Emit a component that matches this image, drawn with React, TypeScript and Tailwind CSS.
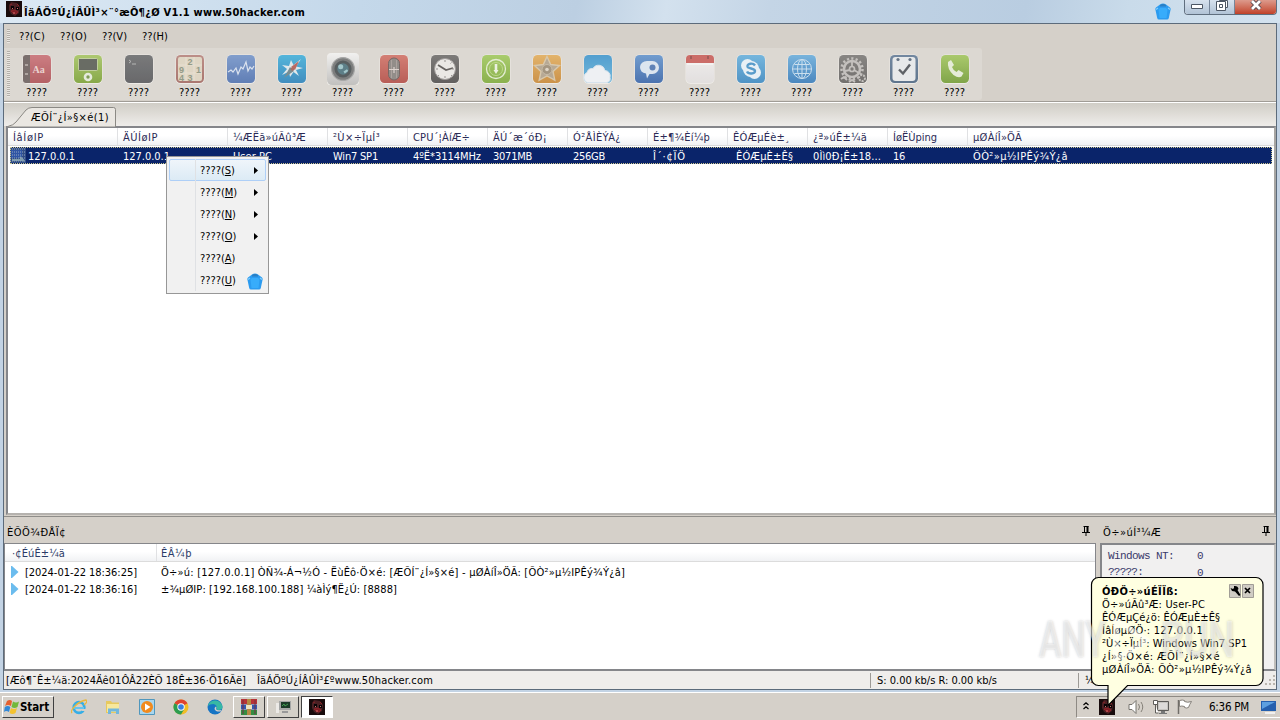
import { useLayoutEffect, useRef } from 'react'
import type { ReactNode } from 'react'
import clsx from 'clsx'

type TextProps = {
  children: string
  w: number
  className?: string
}

// Single line of UI text, tracked so that it takes exactly `w` pixels
function T({ children, w, className }: TextProps) {
  const ref = useRef<HTMLSpanElement>(null)

  useLayoutEffect(() => {
    const el = ref.current
    if (!el) return
    el.style.letterSpacing = '0px'
    const natural = el.getBoundingClientRect().width
    el.style.letterSpacing = `${(w - natural) / children.length}px`
  }, [children, w])

  return (
    <span ref={ref} className={clsx('inline-block shrink-0 whitespace-pre', className)}>
      {children}
    </span>
  )
}

const COLUMNS = [
  { head: 'ÍâÍøIP', hw: 31, cell: '127.0.0.1', cw: 47, width: 'w-[110px]' },
  { head: 'ÄÚÍøIP', hw: 35, cell: '127.0.0.1', cw: 47, width: 'w-[110px]' },
  { head: '¼ÆËã»úÃû³Æ', hw: 73, cell: 'User-PC', cw: 39, width: 'w-[100px]' },
  { head: '²Ù×÷ÏµÍ³', hw: 47, cell: 'Win7 SP1', cw: 45, width: 'w-[80px]' },
  { head: 'CPU´¦ÀíÆ÷', hw: 57, cell: '4ºË*3114MHz', cw: 68, width: 'w-[80px]' },
  { head: 'ÄÚ´æ´óÐ¡', hw: 54, cell: '3071MB', cw: 39, width: 'w-[80px]' },
  { head: 'Ó²ÅÌÈÝÁ¿', hw: 48, cell: '256GB', cw: 32, width: 'w-[80px]' },
  { head: 'É±¶¾Èí¼þ', hw: 57, cell: 'Î´·¢ÏÖ', cw: 33, width: 'w-[80px]' },
  { head: 'ÊÓÆµÉè±¸', hw: 57, cell: 'ÊÓÆµÈ±Ê§', cw: 57, width: 'w-[80px]' },
  { head: '¿ª»úÊ±¼ä', hw: 54, cell: '0Ìì0Ð¡Ê±18...', cw: 68, width: 'w-[80px]' },
  { head: 'ÍøËÙping', hw: 44, cell: '16', cw: 12, width: 'w-[80px]' },
  { head: 'µØÀíÎ»ÖÃ', hw: 49, cell: 'ÕÒ²»µ½IPÊý¾Ý¿â', cw: 95, width: 'w-[240px]' },
]

const MENU = [
  { label: '??(C)', w: 26, gap: 'ml-[9px]' },
  { label: '??(O)', w: 27, gap: 'ml-[15px]' },
  { label: '??(V)', w: 25, gap: 'ml-[15px]' },
  { label: '??(H)', w: 26, gap: 'ml-[15px]' },
]

const CONTEXT = [
  { key: 'S', sub: true },
  { key: 'M', sub: true },
  { key: 'N', sub: true },
  { key: 'O', sub: true },
  { key: 'A', sub: false },
  { key: 'U', sub: false },
]

const BALLOON = [
  { text: 'Ö÷»úÃû³Æ: User-PC', w: 103 },
  { text: 'ÊÓÆµÇé¿ö: ÊÓÆµÈ±Ê§', w: 118 },
  { text: 'ÍâÍøµØÖ·: 127.0.0.1', w: 101 },
  { text: '²Ù×÷ÏµÍ³: Windows Win7 SP1', w: 145 },
  { text: '¿Í»§·Ö×é: ÆÕÍ¨¿Í»§×é', w: 118 },
  { text: 'µØÀíÎ»ÖÃ: ÕÒ²»µ½IPÊý¾Ý¿â', w: 150 },
]

type Tool = { from: string; to: string; art: ReactNode }

const TOOLS: Tool[] = [
  {
    from: '#cb747a',
    to: '#b0555a',
    art: (
      <>
        <path d="M2 5q0-3 3-3h4v28H5q-3 0-3-3z" fill="#706463" />
        <path d="M4 12h3M4 21h3" stroke="#aaa09c" strokeWidth="2" />
        <text x="11.500" y="20" fontSize="10" fontWeight="bold" fill="#ecd3cf" fontFamily="Liberation Serif">Aa</text>
      </>
    ),
  },
  {
    from: '#a9c767',
    to: '#7fa43b',
    art: (
      <>
        <rect x="6.500" y="5.500" width="19" height="12" rx="1" fill="#5d6159" stroke="#d0dfaa" strokeWidth=".8" />
        <circle cx="16" cy="24" r="4.300" fill="#e6eddc" />
        <circle cx="16" cy="24" r="1.700" fill="#76954a" />
      </>
    ),
  },
  {
    from: '#6f7072',
    to: '#5c5d60',
    art: <path d="M6 7l2 1.500-2 1.500M9 11h4" stroke="#b3b3b3" fill="none" />,
  },
  {
    from: '#b98780',
    to: '#a56d66',
    art: (
      <>
        <rect x="4" y="4" width="24" height="24" rx="2" fill="#e0d6c3" />
        <path d="M12 4v24M20 4v24M4 12h24M4 20h24" stroke="#e9e1d2" />
        <g fontSize="9" fill="#8c9580" fontFamily="Liberation Sans" fontWeight="bold">
          <text x="13.500" y="11.500">2</text>
          <text x="5" y="19.500">9</text>
          <text x="22" y="19.500">1</text>
          <text x="5" y="27.500">4</text>
          <text x="13.500" y="27.500">3</text>
        </g>
      </>
    ),
  },
  {
    from: '#7898cc',
    to: '#5375b3',
    art: (
      <path
        d="M3 19l3-2 2 2 3-4 2 6 3-7 2 2 3-7 2 9 2-4 2 2 2-3"
        stroke="#dbe4f2"
        strokeWidth="1.200"
        fill="none"
      />
    ),
  },
  {
    from: '#46b2dc',
    to: '#3186bd',
    art: (
      <>
        <path d="M25 6l-5 7.500 7 1.500-7 2 3 6-5.500-4-3.500 5-1-5.500-7 3.500 5-6-5-4 7 1 2-6 2.500 5z" fill="#e0eaee" />
        <path d="M23 8l-4 9-4-3z" fill="#b95f58" />
        <path d="M8 25l6-11 4 4z" fill="#6f868c" />
        <circle cx="16.500" cy="16" r="1.800" fill="#a7625a" />
      </>
    ),
  },
  {
    from: '#f4f4f3',
    to: '#bfbebd',
    art: (
      <>
        <circle cx="16" cy="16" r="10" fill="#737576" stroke="#a2a3a3" />
        <circle cx="16" cy="16" r="7.500" fill="#4a5154" />
        <circle cx="16" cy="16" r="5" fill="#507681" />
        <circle cx="14" cy="14" r="2.200" fill="#9ec6cb" />
        <path d="M17 19l3-2" stroke="#9ec6cb" strokeWidth="2" />
      </>
    ),
  },
  {
    from: '#d3766b',
    to: '#b5514a',
    art: (
      <>
        <rect x="10.500" y="5" width="11" height="22" rx="5.500" fill="#8b8582" stroke="#705a57" />
        <path d="M13.500 7v18M18.500 7v18" stroke="#a79d99" />
        <path d="M11 16.500h10M16 14v6" stroke="#ddd2cd" strokeWidth="1.200" />
      </>
    ),
  },
  {
    from: '#737170',
    to: '#555352',
    art: (
      <>
        <circle cx="16" cy="16" r="10.500" fill="#eceae8" stroke="#989493" />
        <path d="M9 12l8 5 7-2" stroke="#5b5856" strokeWidth="1.800" fill="none" />
        <path d="M16 7v2M16 23v2M7 16h2M23 16h2M22.500 9.500l-1 1M10 22l-1 1M22 22l1 1" stroke="#918d8b" />
      </>
    ),
  },
  {
    from: '#a4cb62',
    to: '#82ad40',
    art: (
      <>
        <circle cx="16" cy="16" r="9.500" fill="none" stroke="#e5efd4" strokeWidth="1.300" />
        <circle cx="16" cy="16" r="6.500" fill="none" stroke="#bad884" />
        <path d="M16 11v7" stroke="#eef4e3" strokeWidth="2.600" />
        <path d="M13.500 17h5L16 21z" fill="#eef4e3" />
      </>
    ),
  },
  {
    from: '#e4b061',
    to: '#ca8b3b',
    art: (
      <>
        <path
          d="M16 3.500l3.700 8 8.800 1-6.500 6 1.800 8.700L16 23l-7.800 4.200L10 18.500l-6.500-6 8.800-1z"
          fill="#b3a58f"
          stroke="#d9c7a8"
          strokeWidth="1.400"
        />
        <circle cx="16" cy="16.500" r="5" fill="#9f8f79" stroke="#c5b8a3" />
        <circle cx="16" cy="16.500" r="1.800" fill="#dfd5c5" />
      </>
    ),
  },
  {
    from: '#4499cf',
    to: '#69b5dd',
    art: (
      <path
        d="M5 29.500a5.500 5.500 0 0 1 0-10 5.500 5.500 0 0 1 6-4 6.500 6.500 0 0 1 12 2 5.500 5.500 0 0 1 5 7q1 4-3 5z"
        fill="#f0f3f7"
        stroke="#d6e4ef"
      />
    ),
  },
  {
    from: '#6797cf',
    to: '#3c68ac',
    art: (
      <>
        <path d="M7 14a7 6 0 0 1 7-6h5.500a6.500 6.500 0 0 1 0 13h-3L14 25.500l-1-5q-6-1-6-6.500z" fill="#dce7f3" />
        <circle cx="19.500" cy="14.500" r="3" fill="#5279b4" />
      </>
    ),
  },
  {
    from: '#f2f0ef',
    to: '#e3e0e0',
    art: (
      <>
        <path d="M2 10V6q0-4 4-4h20q4 0 4 4v4z" fill="#ca625d" />
        <path d="M7 3v3M24 3v3" stroke="#8c4b48" strokeWidth="1.500" />
        <path d="M3 11h26" stroke="#fff" />
      </>
    ),
  },
  {
    from: '#6bb3df',
    to: '#418cc4',
    art: (
      <>
        <circle cx="12.500" cy="12.500" r="6.500" fill="#eaf3f9" />
        <circle cx="19.500" cy="19.500" r="6.500" fill="#eaf3f9" />
        <circle cx="16" cy="16" r="8" fill="#eaf3f9" />
        <path d="M20 12.500c-2-3-8-2-7.500 1 .5 2.500 7.500 1.500 7.500 4.500 0 3-6.500 3.500-8 .5" stroke="#4b96ca" strokeWidth="2.400" fill="none" />
      </>
    ),
  },
  {
    from: '#6eb0de',
    to: '#3c7fbd',
    art: (
      <g fill="none" stroke="#c9e0f2">
        <circle cx="16" cy="16" r="9.500" />
        <ellipse cx="16" cy="16" rx="4.500" ry="9.500" />
        <path d="M16 6.500v19M6.500 16h19M8.500 11.500h15M8.500 20.500h15" />
      </g>
    ),
  },
  {
    from: '#7f7d7b',
    to: '#676563',
    art: (
      <g fill="none" stroke="#c2bfbc">
        <circle cx="15" cy="16" r="10.500" strokeWidth="2.500" strokeDasharray="2.200 2.200" />
        <circle cx="15" cy="16" r="8" strokeWidth="2.600" />
        <circle cx="15" cy="16" r="2.500" strokeWidth="1.700" />
        <path d="M15 9v4M8 18l5-1M17 17l5 3" strokeWidth="1.800" />
        <circle cx="25" cy="25" r="3" strokeWidth="2" strokeDasharray="2 1" />
        <path d="M4 26l3-2 3 3M12 29l3-2 3 2" strokeWidth="2" />
      </g>
    ),
  },
  {
    from: '#68809b',
    to: '#526b86',
    art: (
      <>
        <rect x="4.500" y="4" width="23" height="24" rx="3" fill="#e9ebed" />
        <circle cx="10" cy="6.500" r="1.600" fill="#5b6b7d" />
        <circle cx="22" cy="6.500" r="1.600" fill="#5b6b7d" />
        <path d="M11 16.500l4 4 7-9" stroke="#51565c" strokeWidth="2.400" fill="none" />
      </>
    ),
  },
  {
    from: '#a5c862',
    to: '#77a03b',
    art: (
      <path
        d="M9 9l3-2 3 5-2 2q1 3 4.500 5l2-2 5 3-2 3.500q-3 2-8-1.500Q8 16 9 9z"
        fill="#e6eed9"
      />
    ),
  },
]

function ToolButton({ tool, index }: { tool: Tool; index: number }) {
  const id = `tool-${index}`
  const big = index === 6
  return (
    <div className="flex w-[51px] shrink-0 flex-col items-center">
      <svg viewBox={big ? '2 2 28 28' : '0 0 32 32'} className="h-[32px] w-[32px] opacity-90">
        <defs>
          <linearGradient id={id} x1="0" y1="0" x2="0" y2="1">
            <stop offset="0" stopColor={tool.from} />
            <stop offset="1" stopColor={tool.to} />
          </linearGradient>
        </defs>
        <rect x="1.500" y="1.500" width="29" height="29.500" rx="5" fill="#efede9" />
        <rect x="2" y="2" width="28" height="28" rx="4.500" fill={`url(#${id})`} />
        {tool.art}
      </svg>
      <T w={21} className="mt-px leading-[14px]">????</T>
    </div>
  )
}

// Blue pentagonal badge, used in the title bar and over the context menu
function BlueBadge({ className }: { className?: string }) {
  return (
    <svg viewBox="0 0 16 17" className={clsx('h-[17px] w-[16px]', className)}>
      <path d="M5 1.500Q8-.5 11 1.500l4 3q1 1 .5 2.500L13.800 15q-.3 1.500-1.800 1.500H4Q2.500 16.500 2.200 15L.5 7Q0 5.500 1 4.500z" fill="#2b9bf0" />
      <path d="M5 2q3-2 6 0v1.500H5z" fill="#2a7fc4" />
      <path d="M3.500 6.500L5 5h6l1.500 1.500-1 8.500h-7z" fill="#37acfb" />
      <path d="M1 6.500l2-1.500M15 6.500L13 5" stroke="#83cdfb" strokeWidth="1.300" />
    </svg>
  )
}

function AppIcon() {
  return (
    <svg viewBox="0 0 16 16" className="h-4 w-4 shrink-0">
      <path d="M0 0h16v16H0z" fill="#180b0c" />
      <path d="M3 4l2-3 6 1 3 4-1 6-4 3-4-2-2-4z" fill="#4a2023" />
      <path d="M5 5h3v3H5zM10 6h3v3h-3z" fill="#070506" />
      <path d="M5 10l4-1 3 2-2 2-3-1zM4 4l2-1M11 3l2 2" stroke="#8c2328" fill="#7d1e24" />
      <path d="M6 7l1 1M11 8l1-1M7 12h2" stroke="#d66b6a" />
    </svg>
  )
}

function Pin({ className }: { className?: string }) {
  return (
    <svg viewBox="0 0 8 10" className={clsx('h-[10px] w-2 shrink-0', className)}>
      <path d="M2.500 0v6M1.500.5h5M0 6.500h8M4 7v3" stroke="#000" fill="none" />
      <path d="M4.500 0h2v6h-2z" />
    </svg>
  )
}

function Grip({ className }: { className?: string }) {
  return (
    <div
      className={clsx(
        'w-[3px] shrink-0 bg-[repeating-linear-gradient(to_bottom,#b3afa9_0_1px,#e9e6e2_1px_2px)]',
        className,
      )}
    />
  )
}

function TitleBar() {
  return (
    <div className="relative flex h-[23px] shrink-0 items-start bg-[linear-gradient(100deg,#dce9f4_0%,#c4d8ea_28%,#bccfe2_45%,#d3e1ee_52%,#c4d5e6_60%,#b9cde1_80%,#c9dbea_88%,#d3e2ef_100%)] pl-[6px] pt-px">
      <AppIcon />
      <T w={281} className="ml-[2px] mt-[4px] text-[11px] font-bold leading-[15px]">
        ÎäÁÖºÚ¿ÍÂÛÌ³×¨°æÔ¶¿Ø V1.1 www.50hacker.com
      </T>
      <BlueBadge className="ml-[850px] mt-[2px]" />
      <div className="ml-[13px] -mt-px flex h-[15px] overflow-hidden rounded-b-[4px] border border-t-0 border-[#5f6e7e] bg-white">
        <div className="flex w-[25px] items-center justify-center border-r border-[#76869a] bg-linear-to-b from-[#d7e2ee] to-[#b1c3d6]">
          <svg viewBox="0 0 12 6" className="h-[6px] w-3">
            <path d="M.5.500h11v4H.500z" fill="#fff" stroke="#4c5664" />
          </svg>
        </div>
        <div className="flex w-[25px] items-start justify-center border-r border-[#76869a] bg-linear-to-b from-[#d7e2ee] to-[#b1c3d6]">
          <svg viewBox="0 0 12 11" className="h-[11px] w-3">
            <path d="M3.500.500h8v7h-8z" fill="#fff" stroke="#4c5664" />
            <path d="M.5 1.500h9v9h-9z" fill="#fff" stroke="#4c5664" />
            <path d="M3.500 4.500h3v3h-3z" fill="#fff" stroke="#4c5664" />
          </svg>
        </div>
        <div className="flex w-[41px] items-start justify-center bg-linear-to-b from-[#dc9a8c] to-[#c04028]">
          <svg viewBox="0 0 12 10" className="h-[10px] w-3">
            <path d="M2 1l8 8M10 1L2 9" stroke="#51434a" strokeWidth="4.500" />
            <path d="M2 1l8 8M10 1L2 9" stroke="#fff" strokeWidth="2.800" />
          </svg>
        </div>
      </div>
    </div>
  )
}

function ContextMenu() {
  return (
    <div className="absolute left-[166px] top-[156px] z-10 h-[138px] w-[103px] border border-[#979797] bg-[#f1f1f1] p-[2px]">
      {CONTEXT.map((item, i) => (
        <div
          key={item.key}
          className={clsx(
            'flex h-[22px] items-center rounded-[2px] border pl-[30px]',
            i === 0
              ? 'border-[#aecff7] bg-linear-to-b from-[#eff5fa] to-[#dcebf5]'
              : 'border-transparent',
          )}
        >
          <T w={21}>????</T>
          <span className="tracking-[-0.1px]">
            (<span className="underline underline-offset-1">{item.key}</span>)
          </span>
          {item.sub && (
            <svg viewBox="0 0 4 7" className="ml-auto mr-[7px] h-[7px] w-1">
              <path d="M0 0v7l4-3.500z" />
            </svg>
          )}
        </div>
      ))}
      <div className="absolute left-[28px] top-[2px] h-[132px] w-px bg-[#dfe1e4]" />
      <BlueBadge className="absolute left-[80px] top-[116px]" />
    </div>
  )
}

function HostList() {
  return (
    <div className="h-[389px] border-2 border-[#85868a] border-r-[#a7a5a2] border-b-[#b5b2ae] bg-white">
      <div className="flex h-[18px] border-b border-[#d9d9d9] bg-linear-to-b from-white from-45% to-[#f1f2f4] text-[#2a2a55]">
        {COLUMNS.map((c, i) => (
          <div
            key={c.head}
            className={clsx(
              'flex items-center pl-[5px] pt-[2px]',
              i < COLUMNS.length - 1 && 'border-r border-[#e0e1e3]',
              c.width,
            )}
          >
            <T w={c.hw}>{c.head}</T>
          </div>
        ))}
      </div>
      <div className="mt-px ml-[2px] flex h-[17px] w-[1262px] items-center bg-[#0a246a] text-white outline-1 -outline-offset-1 outline-dotted outline-[#c9c48c]">
        {COLUMNS.map((c, i) => (
          <div
            key={c.head}
            className={clsx(
              'flex shrink-0 items-center',
              i === 0 ? 'w-[108px]' : c.width,
              i === 0 ? '' : i === 8 ? 'pl-[8px]' : 'pl-[5px]',
            )}
          >
            {i === 0 && (
              <svg viewBox="0 0 16 15" className="mr-[2px] h-[15px] w-4">
                <path d="M0 0h16v15H0z" fill="#2f4c85" />
                <path d="M1 2h11v8H1z" fill="#2f55a4" />
                <path d="M2 12h10M10 9l4 4" stroke="#7f9dae" strokeWidth="2" />
                <path d="M0 1h16M0 4h16M0 7h16M0 10h16M0 13h16" stroke="#94a7c2" strokeDasharray="1 1" />
              </svg>
            )}
            <T w={c.cw} className="mt-px">{c.cell}</T>
          </div>
        ))}
      </div>
    </div>
  )
}

function LogPanel() {
  const rows = [
    {
      time: '[2024-01-22 18:36:25]',
      text: 'Ö÷»ú: [127.0.0.1] ÒÑ¾-Á¬½Ó - ËùÊô·Ö×é: [ÆÕÍ¨¿Í»§×é] - µØÀíÎ»ÖÃ: [ÕÒ²»µ½IPÊý¾Ý¿â]',
      w: 464,
    },
    { time: '[2024-01-22 18:36:16]', text: '±¾µØIP: [192.168.100.188] ¼àÌý¶Ë¿Ú: [8888]', w: 236 },
  ]
  return (
    <div className="flex w-[1092px] flex-col">
      <div className="flex h-[26px] items-center pl-[3px] pt-[4px]">
        <T w={59}>ÈÕÖ¾ÐÅÏ¢</T>
        <Pin className="-mt-[3px] ml-auto mr-[6px]" />
      </div>
      <div className="h-[128px] border border-[#85868a] border-b-2 bg-white">
        <div className="flex h-[18px] border-b border-[#dcdcdc] bg-linear-to-b from-white from-45% to-[#f1f2f4] text-[#2a3a66]">
          <div className="flex w-[152px] items-center border-r border-[#e0e1e3] pl-[7px] pt-px">
            <T w={53}>·¢ÉúÊ±¼ä</T>
          </div>
          <div className="flex items-center pl-[4px] pt-px">
            <T w={31}>ÊÂ¼þ</T>
          </div>
        </div>
        <div className="pt-[2px]">
          {rows.map(r => (
            <div key={r.time} className="flex h-[17px] items-center pl-[6px]">
              <svg viewBox="0 0 8 12" className="-mt-[2px] h-3 w-2">
                <path d="M0 0l1 0 6.500 6L1 12H0z" fill="#6bbcee" />
              </svg>
              <T w={112} className="ml-[6px]">{r.time}</T>
              <T w={r.w} className="ml-[24px]">{r.text}</T>
            </div>
          ))}
        </div>
      </div>
    </div>
  )
}

function StatsPanel() {
  return (
    <div className="ml-[4px] flex flex-1 flex-col">
      <div className="flex h-[26px] items-center pl-[3px] pt-[4px]">
        <T w={58}>Ö÷»úÍ³¼Æ</T>
        <Pin className="-mt-[3px] ml-auto mr-[6px]" />
      </div>
      <div className="h-[128px] border-2 border-[#85868a] border-r-[#c0bebb] bg-[#f1f0f0] pl-[6px] pt-[3px] font-['Liberation_Mono'] text-[11px] leading-[16px] text-[#39396a]">
        <div className="flex">
          <T w={66}>Windows NT:</T>
          <span className="ml-[23px]">0</span>
        </div>
        <div className="flex">
          <T w={35}>?????:</T>
          <span className="ml-[54px] mt-px">0</span>
        </div>
      </div>
    </div>
  )
}

function StatusBar() {
  return (
    <div className="flex h-[18px] items-center bg-[#efedeb] pl-[2px]">
      <T w={240}>[Æô¶¯Ê±¼ä:2024Äê01ÔÂ22ÈÕ 18Ê±36·Ö16Ãë]</T>
      <T w={176} className="ml-[11px]">ÎäÁÖºÚ¿ÍÂÛÌ³£ºwww.50hacker.com</T>
      <div className="ml-[437px] flex h-[15px] items-center border-l border-[#9d9a96] pl-[6px]">
        <T w={120}>S: 0.00 kb/s R: 0.00 kb/s</T>
      </div>
      <div className="ml-[81px] flex h-[15px] items-center border-l border-[#9d9a96] pl-[6px]">
        <span>¼</span>
      </div>
      <svg viewBox="0 0 10 10" className="ml-auto mr-px h-[10px] w-[10px]">
        <path d="M8 0h2v2H8zM4 4h2v2H4zM8 4h2v2H8zM0 8h2v2H0zM4 8h2v2H4zM8 8h2v2H8z" fill="#bab5ae" />
      </svg>
    </div>
  )
}

function Balloon() {
  return (
    <div className="absolute left-[1090px] top-[576px] z-20 h-[132px] w-[174px]">
      <svg viewBox="0 0 174 132" className="absolute inset-0 h-full w-full">
        <path
          d="M8.500 1.500H166a7 7 0 0 1 7 7V102.500a7 7 0 0 1-7 7H37.500L18 129.500V109.500H8.500A7 7 0 0 1 1.500 102.500V8.500A7 7 0 0 1 8.500 1.500z"
          fill="#ffffe1"
          stroke="#000"
          strokeWidth="1.200"
        />
      </svg>
      <div className="relative pl-[12px] pt-[8px] leading-[13px]">
        <div className="flex h-[14px] items-center">
          <T w={76} className="font-bold">ÓÐÖ÷»úÉÏÏß:</T>
          <div className="ml-[51px] flex gap-px">
            <svg viewBox="0 0 12 14" className="h-[14px] w-3">
              <path d="M.5.500h11v13H.500z" fill="#d0ccc4" stroke="#a19d96" />
              <path d="M5 2q4-.5 4.500 3l-1 1 3 5-1.500 1L6 7.500l-3-.5-1.500-3L4 5l1-1z" />
            </svg>
            <svg viewBox="0 0 12 14" className="h-[14px] w-3">
              <path d="M.5.500h11v13H.500z" fill="#d0ccc4" stroke="#a19d96" />
              <path d="M3 4l5 5M8 4L3 9" stroke="#000" strokeWidth="1.700" />
            </svg>
          </div>
        </div>
        {BALLOON.map(l => (
          <div key={l.text} className="flex h-[13px] items-center">
            <T w={l.w}>{l.text}</T>
          </div>
        ))}
      </div>
    </div>
  )
}

function Watermark() {
  return (
    <div className="absolute left-[1039px] top-[615px] z-30 flex h-[50px] items-center font-['Roboto'] text-[50px] font-medium leading-none text-white/50 [text-shadow:0_0_3px_rgba(70,70,70,0.28)]">
      <span className="inline-block w-[66px] shrink-0 origin-left scale-x-[0.68]">ANY</span>
      <svg viewBox="0 0 40 44" className="ml-[5px] h-[44px] w-10 shrink-0">
        <path d="M6 2l30 20L6 42z" fill="none" stroke="#fff" strokeOpacity=".5" strokeWidth="6" />
      </svg>
      <span className="ml-[11px] inline-block shrink-0 origin-left scale-x-[0.74]">RUN</span>
    </div>
  )
}

function TaskButton({ active, children }: { active?: boolean; children: ReactNode }) {
  return (
    <div
      className={clsx(
        'flex h-[22px] w-[32px] items-center justify-center border',
        active
          ? 'border-[#404040] border-b-white border-r-white bg-white'
          : 'border-white border-b-[#404040] border-r-[#404040] bg-[#d4d0c8]',
      )}
    >
      {children}
    </div>
  )
}

function Taskbar() {
  return (
    <div className="flex h-[28px] shrink-0 items-center border-t border-white bg-[#d5d0c9] pl-[2px]">
      <div className="flex h-[22px] w-[52px] items-center border border-white border-b-[#404040] border-r-[#404040] pl-px">
        <svg viewBox="0 0 16 16" className="h-4 w-4">
          <path d="M3 2q3-2 5 0L7 7Q4 5 1 7z" fill="#e5602f" />
          <path d="M9 2.500q3 2 6 0L13.500 8q-3 2-6 0z" fill="#72b83b" />
          <path d="M.8 8q3-2 5.500 0L5 13q-3-2-5 0z" fill="#3288d6" />
          <path d="M7 9q3 2 6 0l-1.500 5q-3 2-6 0z" fill="#f4c22f" />
        </svg>
        <T w={29} className="mt-px text-[11.500px] font-bold">Start</T>
      </div>
      <div className="ml-[17px] flex items-center gap-[18px]">
        <svg viewBox="0 0 16 16" className="h-4 w-4">
          <circle cx="8" cy="8.500" r="5.300" fill="none" stroke="#36aee6" strokeWidth="2.700" />
          <path d="M3 8h10v2H3z" fill="#66c4ee" />
          <path d="M11 10h4v2h-4z" fill="#d5d0c9" />
          <path d="M1 14Q-1 12 4 7T15 1q2 2-2 5" fill="none" stroke="#e9b83e" strokeWidth="1.300" />
        </svg>
        <svg viewBox="0 0 16 16" className="h-4 w-4">
          <path d="M1 2h5l1 1.500h7V14H1z" fill="#e7c95f" />
          <path d="M2 5h12v8H2z" fill="#f7e89d" />
          <path d="M3 9.500h11V15h-3v-2.500H6V15H3z" fill="#73b7dd" />
        </svg>
        <svg viewBox="0 0 16 16" className="h-4 w-4">
          <path d="M.5.500h15v15H.500z" fill="#a9d6ee" stroke="#5097bd" />
          <circle cx="8" cy="8" r="6" fill="#f18a1d" />
          <path d="M6 4.500v7L11.500 8z" fill="#fff" />
        </svg>
        <svg viewBox="0 0 16 16" className="h-4 w-4">
          <circle cx="8" cy="8" r="7.500" fill="#f1bd27" />
          <path d="M8 8L1.500 4.200A7.500 7.500 0 0 1 14.500 4.300z" fill="#df4331" />
          <path d="M8 8L1.500 4.200A7.500 7.500 0 0 0 8 15.500l3-5z" fill="#2d9d50" />
          <circle cx="8" cy="8" r="3.700" fill="#fff" />
          <circle cx="8" cy="8" r="2.800" fill="#397ee0" />
        </svg>
        <svg viewBox="0 0 16 16" className="h-4 w-4">
          <circle cx="8" cy="8" r="7.500" fill="#1674c4" />
          <path d="M.8 7A7.500 7.500 0 0 1 15.500 8q0 3-4 3-2 0-2-1 1-4-3-5-4 0-5.700 2z" fill="#38b8a4" />
          <path d="M9 7.500q1 1.500 0 2.500 1 2 5.500 1l-1 1.500q-5 .5-6-2.500 0-2 1.500-2.500z" fill="#d5d0c9" />
        </svg>
      </div>
      <div className="ml-[10px] flex gap-[2px]">
        <TaskButton>
          <svg viewBox="0 0 18 16" className="h-4 w-[18px]">
            <path d="M1 0h16v5H1z" fill="#b73339" />
            <path d="M1 5.500h16v5H1z" fill="#3557b0" />
            <path d="M1 11h16v5H1z" fill="#358c42" />
            <path d="M7 0h4v16H7z" fill="#b48a42" />
            <path d="M6 6h6v4H6z" fill="#eee3c1" />
            <path d="M3 1v14M15 1v14" stroke="#752f43" />
          </svg>
        </TaskButton>
        <TaskButton>
          <svg viewBox="0 0 16 16" className="h-4 w-4">
            <path d="M1 4h3v10H1z" fill="#eceae6" />
            <path d="M4 2h12v9H4z" fill="#a4a6a5" />
            <path d="M6 3h9v6H6z" fill="#193a27" />
            <path d="M7 7l2-2 1 2 3-2" stroke="#3f9c50" fill="none" />
            <path d="M7 12h6v2H7z" fill="#999" />
          </svg>
        </TaskButton>
        <TaskButton active>
          <AppIcon />
        </TaskButton>
      </div>
      <div className="ml-auto flex h-[22px] w-[204px] items-center border border-[#8e8a84] border-b-white border-r-0 pl-[6px]">
        <svg viewBox="0 0 6 8" className="-mt-[2px] h-2 w-[6px]">
          <path d="M.5 3L3 .8 5.500 3M.5 7L3 4.800 5.500 7" stroke="#000" strokeWidth="1.200" fill="none" />
        </svg>
        <div className="ml-[10px]">
          <AppIcon />
        </div>
        <svg viewBox="0 0 18 16" className="ml-[13px] h-4 w-[18px]">
          <path d="M1 5.500h3l4-4v13l-4-4H1z" fill="#fff" stroke="#77746f" />
          <path d="M10.500 5q2 3 0 6M13 3q3.500 5 0 10" stroke="#858179" fill="none" />
        </svg>
        <svg viewBox="0 0 16 16" className="ml-[7px] h-4 w-4">
          <path d="M4.500 2.500h11v9h-11z" fill="#c6c4c0" stroke="#5e5c59" />
          <path d="M6 4h8v6H6z" fill="#fff" opacity=".4" />
          <path d="M8 12h4v2h2v1H6v-1h2z" fill="#777" />
          <path d="M.5 1.500h4v4h-4zM2.500 6v8h3" stroke="#5e5c59" fill="#fff" />
        </svg>
        <svg viewBox="0 0 16 16" className="ml-[8px] h-4 w-4">
          <path d="M1.500 1v14" stroke="#706d68" strokeWidth="1.500" />
          <path d="M2.500 1.500q3-1 5 0v1q3 1.500 7 0-2 3-3 6-2 1-4 0v-1q-3-1-5 0z" fill="#fff" stroke="#85817b" />
        </svg>
        <T w={40} className="ml-[16px] mt-px text-[11.500px]">6:36 PM</T>
        <svg viewBox="0 0 15 14" className="ml-auto mr-[4px] h-[14px] w-[15px]">
          <path d="M0 1h15v10H0z" fill="#245fae" />
          <path d="M1 2h13L1 9z" fill="#5c9fe0" />
          <path d="M4 12h10v2H4z" fill="#f0f0f0" />
        </svg>
      </div>
    </div>
  )
}

export default function App() {
  return (
    <div className="relative flex h-[720px] w-[1280px] flex-col overflow-hidden bg-[#c3d3e4] font-['DejaVu_Sans_Condensed','DejaVu_Sans',sans-serif] text-[11px] leading-[13px] text-black">
      <TitleBar />
      <div className="ml-[3px] mr-[3px] h-[667px] border border-[#5c6b7b] bg-[#d5d0c9]">
        <div className="flex h-[24px] items-center pl-[3px]">
          <Grip className="h-[14px]" />
          {MENU.map(m => (
            <T key={m.label} w={m.w} className={m.gap}>{m.label}</T>
          ))}
        </div>
        <div className="flex h-[54px] border-b border-[#a09c96]">
          <div className="flex h-[52px] w-[978px] rounded-r-[3px] bg-[#dcd8d2] pl-[3px] pt-[5px]">
            <Grip className="-mt-[2px] h-[46px]" />
            <div className="flex pl-[1px]">
              {TOOLS.map((tool, i) => (
                <ToolButton key={i} tool={tool} index={i} />
              ))}
            </div>
          </div>
        </div>
        <div className="h-[24px] border-t border-white bg-linear-to-b from-[#d0cdc6] to-[#efedea]">
          <div className="relative h-[24px] w-[113px]">
            <svg viewBox="0 0 113 24" className="absolute inset-0 h-full w-full">
              <path d="M5 23Q9 22.500 12 19L22 7q2.500-2.500 6-2.500H109.500q2 0 2 2V24H3z" fill="#eae7e2" stroke="#8b8984" />
            </svg>
            <T w={78} className="relative ml-[27px] mt-[8px]">ÆÕÍ¨¿Í»§×é(1)</T>
          </div>
        </div>
        <div className="pl-[2px]">
          <HostList />
        </div>
        <div className="mt-px flex h-[155px] border-t border-[#8f8d89]">
          <LogPanel />
          <StatsPanel />
        </div>
        <StatusBar />
      </div>
      <div className="min-h-0 flex-1" />
      <Taskbar />
      <ContextMenu />
      <Balloon />
      <Watermark />
    </div>
  )
}
